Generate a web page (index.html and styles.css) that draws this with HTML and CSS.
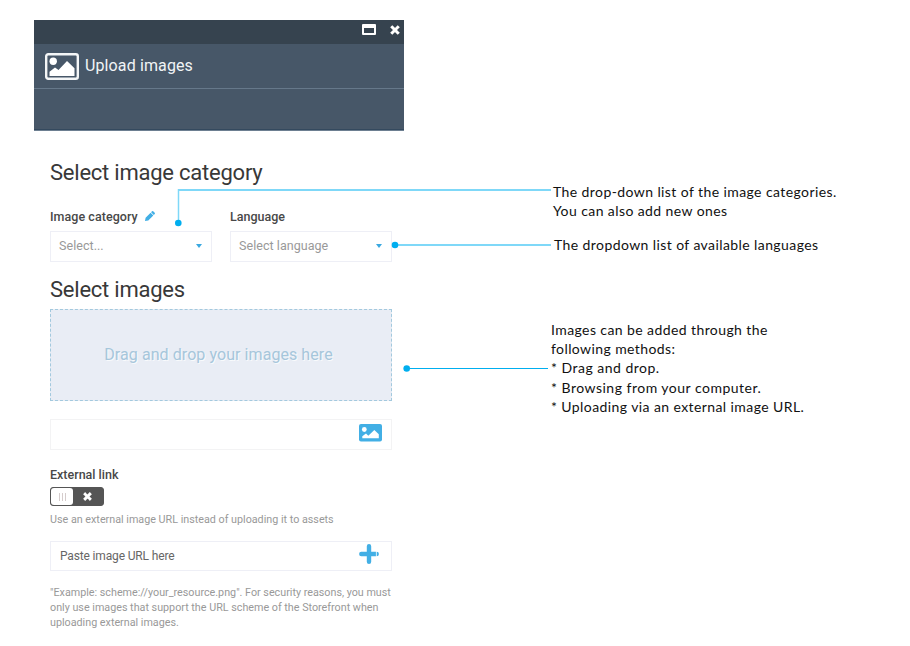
FILE: index.html
```html
<!DOCTYPE html>
<html lang="en">
<head>
<meta charset="utf-8">
<title>Upload images</title>
<link rel="stylesheet" href="styles.css">
</head>
<body>
<div class="page">
  <main class="panel">
    <header class="head">
      <div class="titlebar">
        <svg width="14" height="12" viewBox="0 0 14 12"><path fill="#fff" fill-rule="evenodd" d="M1 0h12a1 1 0 0 1 1 1v9a1 1 0 0 1-1 1H1a1 1 0 0 1-1-1V1a1 1 0 0 1 1-1zM2 4v5h10V4z"/></svg>
        <svg class="close" width="10" height="10" viewBox="0 0 10 10"><path stroke="#fff" stroke-width="3" stroke-linecap="square" d="M2.300 2.300l5.400 5.400M7.700 2.300L2.300 7.700"/></svg>
      </div>
      <div class="heading">
        <svg width="34" height="27" viewBox="0 0 34 27"><rect x="1.200" y="1.200" width="31.600" height="24.600" rx="2" fill="none" stroke="#f4f6f7" stroke-width="2.400"/><circle cx="8.200" cy="8.200" r="3.700" fill="#fff"/><path fill="#fff" d="M4.500 23v-4.200l5.500-4.300 3.500 2.500L22 8l7.500 7.300V23z"/></svg>
        <h1>Upload images</h1>
      </div>
      <div class="toolbar"></div>
    </header>
    <section class="form">
      <h2 class="t-category">Select image category</h2>
      <div class="fields">
        <div>
          <label class="l-category">Image category</label><svg class="pencil" width="10" height="10" viewBox="0 0 10 10"><path fill="#42afe5" d="M0 10l.6-3.300L5.600 1.700l2.700 2.700-5 5zM6.100 1.200l.9-.9q.6-.5 1.200 0l1.500 1.500q.5.6 0 1.200l-.9.9z"/></svg>
          <div class="select"><span>Select...</span><i class="caret"></i></div>
        </div>
        <div>
          <label>Language</label>
          <div class="select"><span>Select language</span><i class="caret"></i></div>
        </div>
      </div>
      <h2 class="t-images">Select images</h2>
      <div class="drop"><span>Drag and drop your images here</span></div>
      <div class="browse">
        <svg width="23" height="18" viewBox="0 0 23 18"><rect width="23" height="17.500" rx="2" fill="#42afe5"/><circle cx="5.300" cy="5.500" r="2.400" fill="#fff"/><path fill="#fff" d="M3.300 14.300v-2L7 9.600l2.300 2.200 6-5.900 4.500 4.300v4.100z"/></svg>
      </div>
      <label class="l-link">External link</label>
      <div class="toggle"><span class="knob"><i></i><i></i><i></i></span><svg width="9" height="9" viewBox="0 0 10 10"><path stroke="#fff" stroke-width="3.200" stroke-linecap="square" d="M2.400 2.400l5.200 5.200M7.600 2.400L2.400 7.600"/></svg></div>
      <p class="hint">Use an external image URL instead of uploading it to assets</p>
      <div class="url"><span>Paste image URL here</span>
        <svg class="plus" width="20" height="20" viewBox="0 0 20 20"><path stroke="#42afe5" stroke-width="4.400" stroke-linecap="round" d="M10 2.300v15.400M2.300 10h15.400"/><path stroke="#fff" stroke-width=".8" d="M17.400 0v20"/></svg>
      </div>
      <p class="example"><span>"Example: scheme://your_resource.png". For security reasons, you must</span><br><span>only use images that support the URL scheme of the Storefront when</span><br><span>uploading external images.</span></p>
    </section>
  </main>
  <aside class="notes">
    <p class="note n1"><span>The drop-down list of the image categories.</span><br><span>You can also add new ones</span></p>
    <p class="note n2"><span>The dropdown list of available languages</span></p>
    <p class="note n3"><span>Images can be added through the</span><br><span>following methods:</span><br><span class="item">* Drag and drop.</span><br><span class="item">* Browsing from your computer.</span><br><span>* Uploading via an external image URL.</span></p>
  </aside>
  <svg class="connectors" width="910" height="646" viewBox="0 0 910 646">
    <path d="M178.500 223V189" fill="none" stroke="#7fd8f8" stroke-width="1.500"/>
    <path d="M178 190H551M395 245H551" fill="none" stroke="#7fd8f8" stroke-width="2"/>
    <path d="M407 368.500H548" fill="none" stroke="#00aeef" stroke-width="1"/>
    <g fill="#00aeef"><circle cx="178.300" cy="223" r="3.300"/><circle cx="395" cy="245" r="3.300"/><circle cx="406.700" cy="368.500" r="3.300"/></g>
  </svg>
</div>
</body>
</html>
```
FILE: styles.css
```css
* { box-sizing: border-box; }
body { margin: 0; background: #fff; font-family: Roboto, "Liberation Sans", sans-serif; }
h1, h2, p { margin: 0; font-weight: 400; }
svg { display: block; flex: none; }
span { white-space: nowrap; }

.page { position: relative; width: 910px; height: 646px; overflow: hidden; display: grid; grid-template-columns: 370px 1fr; column-gap: 147px; padding: 20px 0 0 34px; }
.connectors { position: absolute; left: 0; top: 0; }

.head { height: 111px; background: #475768; border-bottom: 1px solid #6d7f91; }
.titlebar { height: 24px; background: #36434f; display: flex; justify-content: flex-end; padding: 4px 4px 0 0; gap: 14px; }
.close { margin-top: 1px; }
.heading { height: 45px; display: flex; align-items: center; gap: 6px; padding-left: 11px; border-bottom: 1px solid #66788a; }
h1 { font-size: 16px; line-height: 20px; color: #f1f4f6; letter-spacing: .12px; }
.toolbar { height: 41px; border-bottom: 1px solid #34495e; }

.form { padding: 28px 12px 0 16px; }
h2 { font-size: 22px; line-height: 28px; color: #383838; letter-spacing: -.23px; }
.fields { display: grid; grid-template-columns: 162px 162px; column-gap: 18px; margin-top: 22px; }
label { display: inline-block; font-size: 12.5px; line-height: 16px; font-weight: 500; color: #484848; vertical-align: top; }
.l-category { letter-spacing: .05px; }
.pencil { display: inline-block; margin: 2px 0 0 7px; vertical-align: top; }
.select { height: 31px; margin-top: 3px; border: 1px solid #eeeff6; display: flex; align-items: center; justify-content: space-between; padding: 0 9px 2px 8px; font-size: 12.5px; color: #999; letter-spacing: .05px; }
.caret { border: 3px solid transparent; border-top: 4px solid #3aa8e0; border-bottom: 0; }
.t-images { margin-top: 14px; }
.drop { height: 92px; margin-top: 5px; background: #e9edf5; border: 1px dashed #a3c9de; display: flex; justify-content: center; align-items: center; font-size: 16px; letter-spacing: .07px; color: #a6c6db; padding: 0 5px 2px 0; text-shadow: 1px 1px #f8fafc; }
.browse { height: 31px; margin-top: 18px; border: 1px solid #f3f3f4; display: flex; justify-content: flex-end; padding: 4px 9px 0 0; }
.l-link { margin-top: 17px; display: block; }
.toggle { width: 54px; height: 19px; margin-top: 4px; background: #555; border: 1px solid #555; border-radius: 3px; display: flex; align-items: center; gap: 10px; }
.knob { width: 22px; height: 17px; background: #fff; border-radius: 3px; display: flex; align-items: center; justify-content: center; gap: 2px; }
.knob i { width: 1px; height: 8px; background: #d5cccc; }
.hint, .example { font-size: 10.75px; line-height: 15px; color: #999; }
.hint { margin-top: 6px; }
.url { height: 30px; margin-top: 14px; border: 1px solid #eeeff6; display: flex; align-items: center; justify-content: space-between; padding: 0 12px 0 9px; font-size: 12px; letter-spacing: -.15px; color: #666; }
.plus { margin-bottom: 4px; }
.example { margin-top: 14px; }

.notes { font-family: Lato, "Liberation Sans", sans-serif; font-size: 14px; letter-spacing: .41px; color: #111; }
.note { line-height: 19.3px; }
.item { letter-spacing: .49px; }
.n1 { margin: 162px 0 0 2px; }
.n2 { margin: 14px 0 0 3px; }
.n3 { margin-top: 66px; }
```
